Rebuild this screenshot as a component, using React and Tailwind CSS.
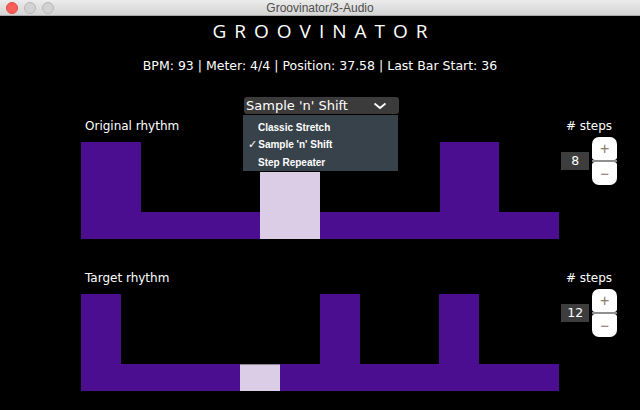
import React from "react";

const PURPLE = "bg-[#4b0e91]";

function Rhythm({ steps, tall, light }) {
  return (
    <div className="flex w-[478px] h-[97px] items-end">
      {Array.from({ length: steps }).map((_, i) => {
        const isTall = tall.includes(i);
        const isLight = i === light;
        return (
          <div
            key={i}
            className={`flex-1 ${isTall ? "h-[97px]" : "h-[27px]"} ${
              isLight ? "bg-[#dccde6] border-t border-[#8d8594]" : PURPLE
            }`}
          />
        );
      })}
    </div>
  );
}

function Steps({ value }) {
  return (
    <div className="flex flex-col items-center w-[56px] ml-[2px]">
      <div className="h-[16px] leading-[16px] text-[12px] text-white">
        # steps
      </div>
      <div className="mt-[3px] flex items-center w-full">
        <div className="w-[29px] h-[18px] bg-[#3d3d3d] text-white text-[12.5px] leading-[18px] text-center">
          {value}
        </div>
        <div className="ml-[3px] w-[25px] flex flex-col">
          <div className="h-[23px] bg-white rounded-t-[7px] rounded-b-[3px] flex items-center justify-center text-[#8a7b70] text-[16px] leading-none font-['Liberation_Sans',sans-serif]">
            +
          </div>
          <div className="h-[2px] bg-[#8f8f8f]" />
          <div className="h-[23px] bg-white rounded-b-[7px] rounded-t-[3px] flex items-center justify-center text-[#8a7b70] text-[15px] leading-none font-['Liberation_Sans',sans-serif]">
            −
          </div>
        </div>
      </div>
    </div>
  );
}

function Section({ label, steps, tall, light, value }) {
  return (
    <div className="flex pl-[81px]">
      <div className="flex flex-col">
        <div className="h-[16px] leading-[16px] text-[12px] text-white pl-[4px]">
          {label}
        </div>
        <div className="mt-[8px]">
          <Rhythm steps={steps} tall={tall} light={light} />
        </div>
      </div>
      <Steps value={value} />
    </div>
  );
}

export default function App() {
  return (
    <div className="w-[640px] h-[410px] bg-black overflow-hidden flex flex-col font-['DejaVu_Sans',sans-serif]">
      {/* title bar */}
      <div className="h-[16px] shrink-0 bg-gradient-to-b from-[#ececec] to-[#d4d4d4] border-b border-[#a9a9a9] grid grid-cols-[1fr_auto_1fr] items-center">
        <div className="flex items-center gap-[6px] pl-[6px]">
          <div className="w-[12px] h-[12px] rounded-full bg-[#fc5f57] border border-[#df4a42]" />
          <div className="w-[12px] h-[12px] rounded-full bg-[#d2d2d2] border border-[#b8b8b8]" />
          <div className="w-[12px] h-[12px] rounded-full bg-[#d2d2d2] border border-[#b8b8b8]" />
        </div>
        <div className="text-[12px] leading-[14px] text-[#4d4d4d] font-['Liberation_Sans',sans-serif]">
          Groovinator/3-Audio
        </div>
        <div />
      </div>

      {/* header */}
      <div className="mt-[4px] text-center text-white text-[19px] leading-[22px] tracking-[8px] pl-[8px] font-['Open_Sans',sans-serif]">
        GROOVINATOR
      </div>
      <div className="mt-[16px] text-center text-white text-[12.5px] leading-[16px]">
        BPM: 93 | Meter: 4/4 | Position: 37.58 | Last Bar Start: 36
      </div>

      {/* dropdown */}
      <div className="mt-[23px] flex justify-center pl-[3px] relative z-10">
        <div className="relative">
          <div className="w-[155px] h-[17px] bg-[#3b3b3b] rounded-[3px] flex items-center justify-between pl-[2px] pr-[12px] text-white text-[13px] leading-[17px]">
            <span>Sample 'n' Shift</span>
            <svg width="14" height="8" viewBox="0 0 14 8">
              <path d="M1.5 1.5 L7 6 L12.5 1.5" fill="none" stroke="white" strokeWidth="1.8" />
            </svg>
          </div>
          <div className="absolute left-[-2px] top-[17px] w-[157px] h-[58px] bg-[#37424a] border border-black flex flex-col pt-[4px] text-white text-[10px] font-bold font-['Liberation_Sans',sans-serif]">
            <div className="h-[17px] leading-[17px] pl-[15px]">Classic Stretch</div>
            <div className="h-[18px] leading-[18px] pl-[5px]">
              <span className="font-['DejaVu_Sans',sans-serif] font-normal text-[11px] mr-[1px]">✓</span>Sample 'n' Shift
            </div>
            <div className="h-[18px] leading-[18px] pl-[15px]">Step Repeater</div>
          </div>
        </div>
      </div>

      <div className="mt-[4px]">
        <Section label="Original rhythm" steps={8} tall={[0, 3, 6]} light={3} value="8" />
      </div>
      <div className="mt-[31px]">
        <Section label="Target rhythm" steps={12} tall={[0, 6, 9]} light={4} value="12" />
      </div>
    </div>
  );
}
